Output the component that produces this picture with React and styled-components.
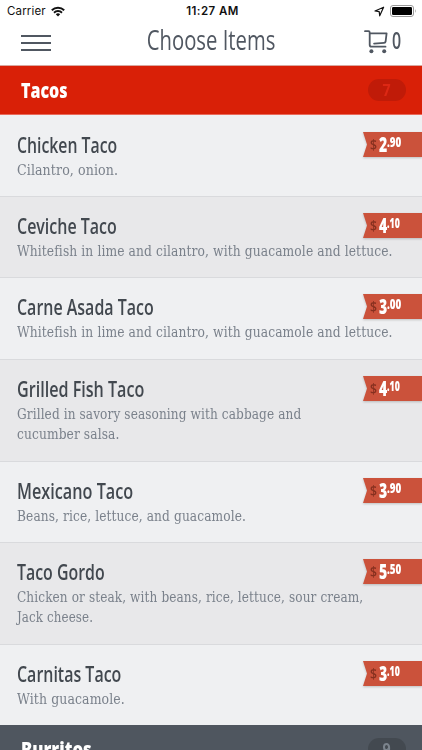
import React, { useLayoutEffect, useRef, useState } from "react";
import styled, { createGlobalStyle } from "styled-components";

const GlobalStyle = createGlobalStyle`
  * { box-sizing: border-box; }
  body { margin: 0; background: #eff0f2; overflow: hidden; }
`;

const condensed = `"Open Sans", "Noto Sans", sans-serif`;

const Screen = styled.main`
  width: 422px;
  height: 750px;
  overflow: hidden;
  background: #eff0f2;
  font-family: ${condensed};
`;

const CondensedText = styled.span`
  display: inline-block;
  white-space: nowrap;
  transform-origin: ${(p) => p.$origin} center;
`;

// Condenses a run of text horizontally to the given advance width.
function Fit({ width, origin = "left", children }) {
  const ref = useRef(null);
  const [scale, setScale] = useState(1);
  useLayoutEffect(() => {
    setScale(width / ref.current.offsetWidth);
  }, [width, children]);
  return (
    <CondensedText ref={ref} $origin={origin} style={{ transform: `scaleX(${scale})` }}>
      {children}
    </CondensedText>
  );
}

const StatusBar = styled.div`
  height: 22px;
  background: #fff;
  display: grid;
  grid-template-columns: 1fr auto 1fr;
  align-items: center;
  padding: 0 5px 0 7px;
  font: 400 11.5px/22px Inter, sans-serif;
  color: #111;
`;
const Carrier = styled.div`
  display: flex;
  align-items: center;
  gap: 5px;
  letter-spacing: 0.15px;
`;
const Clock = styled.div`
  font-weight: 600;
  letter-spacing: 0.45px;
  padding-left: 1px;
`;
const Indicators = styled.div`
  display: flex;
  align-items: center;
  justify-content: flex-end;
  gap: 5px;
`;

const NavBar = styled.header`
  height: 44px;
  background: #fff;
  border-bottom: 1px solid #d9a8a0;
  display: grid;
  grid-template-columns: 100px 1fr 100px;
  color: #505761;
`;
const MenuButton = styled.div`
  padding: 13px 0 0 21px;
  display: flex;
  flex-direction: column;
  gap: 5px;
`;
const MenuLine = styled.div`
  width: 30px;
  height: 2px;
  background: #505761;
`;
const NavTitle = styled.h1`
  margin: 0;
  font-size: 26.5px;
  font-weight: 400;
  line-height: 36px;
  text-align: center;
`;
const Cart = styled.div`
  display: flex;
  padding: 8px 0 0 42px;
  gap: 4px;
  font-size: 23px;
  font-weight: 600;
  line-height: 21px;
`;

const SectionBar = styled.div`
  height: 49px;
  display: flex;
  justify-content: space-between;
  align-items: center;
  padding: 0 16px 0 21px;
  background: ${(p) => (p.$active ? "#d92007" : "#4f565f")};
  border-bottom: 1px solid ${(p) => (p.$active ? "#e9695a" : "#4f565f")};
`;
const SectionTitle = styled.h2`
  margin: 0;
  color: #fff;
  font-size: 21px;
  font-weight: 800;
  line-height: 47px;
`;
const CountPill = styled.div`
  width: 38px;
  height: 22px;
  border-radius: 11px;
  background: ${(p) => (p.$active ? "#c01b08" : "#434950")};
  color: ${(p) => (p.$active ? "#dd2814" : "#7b838c")};
  font-size: 16px;
  font-weight: 700;
  line-height: 22px;
  text-align: center;
`;

const Item = styled.article`
  height: ${(p) => p.$h}px;
  display: grid;
  grid-template-columns: 363px 59px;
  background: ${(p) => (p.$shade ? "#e8e8ea" : "#eff0f2")};
  box-shadow: ${(p) => (p.$first ? "none" : "inset 0 1px #d9dadd")};
`;
const Copy = styled.div`
  padding: 15px 0 0 16.6px;
`;
const ItemName = styled.h3`
  margin: 0;
  height: 29.5px;
  color: #42484f;
  font-size: 22px;
  font-weight: 600;
  line-height: 29px;
`;
const Description = styled.p`
  margin: 0;
  color: #7a818b;
  font-family: "DejaVu Serif", serif;
  font-stretch: 75%;
  font-size: 14.3px;
  letter-spacing: 0.1px;
  line-height: 20.7px;
`;
const DescriptionLine = styled.span`
  display: block;
  white-space: nowrap;
`;
const TagShadow = styled.div`
  filter: drop-shadow(0 1px 1px #0003);
`;
const PriceTag = styled.div`
  margin-top: 17px;
  height: 25px;
  display: flex;
  align-items: flex-start;
  padding-left: 7px;
  background: #cb523b;
  clip-path: polygon(0 0, 100% 0, 100% 100%, 0 100%, 4px 50%);
  color: #fff;
`;
const Dollar = styled.span`
  width: 9px;
  color: #86301f;
  font-size: 14px;
  font-weight: 600;
  line-height: 25px;
`;
const Whole = styled.span`
  width: 8.2px;
  font-size: 21.5px;
  font-weight: 800;
  line-height: 24px;
`;
const Cents = styled.span`
  font-size: 14px;
  font-weight: 800;
  line-height: 20px;
`;

const items = [
  { name: "Chicken Taco", w: 100.5, lines: [["Cilantro, onion.", 101]], whole: "2", cents: ".90", h: 81 },
  { name: "Ceviche Taco", w: 99.5, lines: [["Whitefish in lime and cilantro, with guacamole and lettuce.", 376]], whole: "4", cents: ".10", h: 81 },
  { name: "Carne Asada Taco", w: 136.5, lines: [["Whitefish in lime and cilantro, with guacamole and lettuce.", 376]], whole: "3", cents: ".00", h: 82 },
  { name: "Grilled Fish Taco", w: 127.5, lines: [["Grilled in savory seasoning with cabbage and", 284], ["cucumber salsa.", 102]], whole: "4", cents: ".10", h: 102 },
  { name: "Mexicano Taco", w: 116.5, lines: [["Beans, rice, lettuce, and guacamole.", 229]], whole: "3", cents: ".90", h: 81 },
  { name: "Taco Gordo", w: 87.5, lines: [["Chicken or steak, with beans, rice, lettuce, sour cream,", 346], ["Jack cheese.", 76]], whole: "5", cents: ".50", h: 102 },
  { name: "Carnitas Taco", w: 104.5, lines: [["With guacamole.", 108]], whole: "3", cents: ".10", h: 81 },
];

const WifiIcon = () => (
  <svg width="14" height="11" viewBox="0 0 14 11" fill="none" stroke="#111" strokeWidth="1.9">
    <path d="M.8 4.2a8.9 8.9 0 0 1 12.4 0M3 6.7a5.7 5.7 0 0 1 8 0" />
    <path d="M7 10.4 4.8 8.2a3.2 3.2 0 0 1 4.4 0z" fill="#111" stroke="none" />
  </svg>
);
const LocationIcon = () => (
  <svg width="11" height="11" viewBox="0 0 11 11" fill="none" stroke="#111" strokeWidth="1.2" strokeLinejoin="round">
    <path d="M9.6 1.2 1 5l4.2.6.5 4.2z" />
  </svg>
);
const BatteryIcon = () => (
  <svg width="27" height="12" viewBox="0 0 27 12">
    <rect x=".5" y=".5" width="23" height="11" rx="2.5" fill="none" stroke="#999" />
    <rect x="2" y="2" width="20" height="8" rx="1.2" fill="#000" />
    <path d="M25 4q1.6 2 0 4z" fill="#999" />
  </svg>
);
const CartIcon = () => (
  <svg width="24" height="24" viewBox="0 0 24 24" fill="none" stroke="#505761" strokeWidth="1.8" strokeLinecap="round" strokeLinejoin="round">
    <path d="M1 1.2h3.5q1.2 0 1.2 1.3v12.2q0 2 1.8 2h14M6 3.3h16.6l-1 8.2q-.2 1.2-1.5 1.3l-10 .8" />
    <circle cx="7.4" cy="21.3" r="2" fill="#505761" stroke="none" />
    <circle cx="20.2" cy="21.3" r="2" fill="#505761" stroke="none" />
  </svg>
);

export default function App() {
  return (
    <Screen>
      <GlobalStyle />
      <StatusBar>
        <Carrier>Carrier<WifiIcon /></Carrier>
        <Clock>11:27 AM</Clock>
        <Indicators><LocationIcon /><BatteryIcon /></Indicators>
      </StatusBar>
      <NavBar>
        <MenuButton><MenuLine /><MenuLine /><MenuLine /></MenuButton>
        <NavTitle><Fit width={128.5} origin="center">Choose Items</Fit></NavTitle>
        <Cart><CartIcon /><Fit width={9}>0</Fit></Cart>
      </NavBar>
      <SectionBar $active>
        <SectionTitle><Fit width={46.5}>Tacos</Fit></SectionTitle>
        <CountPill $active><Fit width={8} origin="center">7</Fit></CountPill>
      </SectionBar>
      {items.map((item, i) => (
        <Item key={item.name} $h={item.h} $shade={i % 2 === 1} $first={i === 0}>
          <Copy>
            <ItemName><Fit width={item.w}>{item.name}</Fit></ItemName>
            <Description>
              {item.lines.map(([line, width]) => (
                <DescriptionLine key={line}><Fit width={width}>{line}</Fit></DescriptionLine>
              ))}
            </Description>
          </Copy>
          <TagShadow>
            <PriceTag>
              <Dollar><Fit width={7}>$</Fit></Dollar>
              <Whole><Fit width={8.5}>{item.whole}</Fit></Whole>
              <Cents><Fit width={item.cents === ".10" ? 12.5 : 14}>{item.cents}</Fit></Cents>
            </PriceTag>
          </TagShadow>
        </Item>
      ))}
      <SectionBar>
        <SectionTitle><Fit width={71}>Burritos</Fit></SectionTitle>
        <CountPill><Fit width={8} origin="center">9</Fit></CountPill>
      </SectionBar>
    </Screen>
  );
}
